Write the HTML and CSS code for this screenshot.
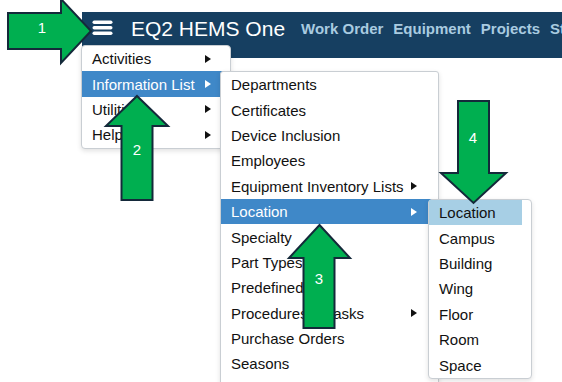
FILE: index.html
```html
<!DOCTYPE html>
<html>
<head>
<meta charset="utf-8">
<link rel="stylesheet" href="styles.css">
</head>
<body>
<div class="page">
  <header class="navbar">
    <span class="hamburger" aria-label="menu">
      <svg width="21" height="16" viewBox="0 0 21 16"><rect x="0.5" y="0.5" width="20" height="3.5" rx="1.75"/><rect x="0.5" y="6" width="20" height="3.5" rx="1.75"/><rect x="0.5" y="11.5" width="20" height="3.5" rx="1.75"/></svg>
    </span>
    <span class="brand">EQ2 HEMS One</span>
    <nav class="links">
      <a>Work Order</a>
      <a>Equipment</a>
      <a>Projects</a>
      <a>Standards</a>
    </nav>
  </header>

  <ul class="menu menu-main">
    <li class="item sub">Activities<i class="caret"></i></li>
    <li class="item sub active">Information List<i class="caret"></i></li>
    <li class="item sub">Utilities<i class="caret"></i></li>
    <li class="item sub">Help<i class="caret"></i></li>
  </ul>

  <ul class="menu menu-info">
    <li class="item">Departments</li>
    <li class="item">Certificates</li>
    <li class="item">Device Inclusion</li>
    <li class="item">Employees</li>
    <li class="item sub">Equipment Inventory Lists<i class="caret"></i></li>
    <li class="item sub active">Location<i class="caret"></i></li>
    <li class="item">Specialty</li>
    <li class="item">Part Types</li>
    <li class="item">Predefined</li>
    <li class="item sub">Procedures &amp; Tasks<i class="caret"></i></li>
    <li class="item">Purchase Orders</li>
    <li class="item">Seasons</li>
  </ul>

  <ul class="menu menu-loc">
    <li class="item hover">Location</li>
    <li class="item">Campus</li>
    <li class="item">Building</li>
    <li class="item">Wing</li>
    <li class="item">Floor</li>
    <li class="item">Room</li>
    <li class="item">Space</li>
  </ul>

  <svg class="callouts" width="562" height="382" viewBox="0 0 562 382">
    <g class="arrow">
      <polygon points="8,13 61,13 61,-1 91,31 61,63 61,49 8,49"/>
      <polygon points="137,96 168,126 152.5,126 152.5,200 121.5,200 121.5,126 106,126"/>
      <polygon points="319.5,225 350,258 334.5,258 334.5,328 303.5,328 303.5,258 289,258"/>
      <polygon points="458,101 489,101 489,173 506,173 473.5,203 441,173 458,173"/>
    </g>
    <g class="label">
      <text x="42" y="33">1</text>
      <text x="137" y="155">2</text>
      <text x="319" y="284">3</text>
      <text x="473" y="143">4</text>
    </g>
  </svg>
</div>
</body>
</html>
```

FILE: styles.css
```css
* { box-sizing: border-box; }
html, body { margin: 0; padding: 0; background: #fff; }
body { font-family: "Liberation Sans", Arial, sans-serif; }

.page {
  position: relative;
  width: 562px;
  height: 382px;
  overflow: hidden;
  padding: 12px 0 0 82px;
}

.navbar {
  height: 46px;
  background: #163f61;
  display: flex;
  align-items: flex-start;
  padding: 0 0 0 10px;
  white-space: nowrap;
}
.hamburger {
  height: 34px;
  display: flex;
  align-items: center;
  margin-top: -1px;
}
.hamburger svg { fill: #fff; display: block; }
.brand {
  color: #fff;
  font-size: 21px;
  line-height: 34px;
  margin-left: 18px;
}
.links {
  display: flex;
  gap: 10px;
  margin-left: 16px;
  line-height: 34px;
}
.links a {
  color: #a9cbe0;
  font-weight: bold;
  font-size: 15px;
}

.menu {
  position: absolute;
  margin: 0;
  padding: 0;
  list-style: none;
  background: #fff;
  border: 1px solid #c9ced3;
  border-radius: 4px;
  box-shadow: 0 2px 5px rgba(0, 0, 0, 0.12);
  font-size: 15px;
  color: #111;
}
.menu-main { left: 81px; top: 45px; width: 150px; }
.menu-info { left: 220px; top: 71px; width: 219px; border-radius: 3px; padding-bottom: 12px; }
.menu-loc { left: 428px; top: 199px; width: 104px; padding-right: 9px; }

.item {
  display: flex;
  align-items: center;
  height: 25.4px;
  padding: 0 20px 0 10px;
  white-space: nowrap;
}
.menu-main .item { padding-right: 19px; }
.menu-info .item { padding-right: 21px; }
.item.active { background: #3f88c8; color: #fff; }
.item.hover { background: #a7cfe5; }

.caret {
  margin-left: auto;
  width: 0;
  height: 0;
  border-left: 6px solid #111;
  border-top: 4px solid transparent;
  border-bottom: 4px solid transparent;
}
.active .caret { border-left-color: #fff; }

.callouts {
  position: absolute;
  left: 0;
  top: 0;
  pointer-events: none;
}
.arrow polygon {
  fill: #00af50;
  stroke: #14293a;
  stroke-width: 2;
  stroke-linejoin: miter;
}
.label text {
  fill: #fff;
  font-family: "Liberation Sans", Arial, sans-serif;
  font-size: 15px;
  text-anchor: middle;
}
```
